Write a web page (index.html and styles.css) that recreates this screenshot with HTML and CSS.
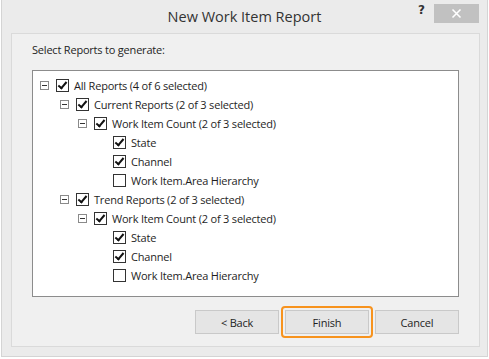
FILE: index.html
```html
<!DOCTYPE html>
<html lang="en">
<head>
    <meta charset="UTF-8">
    <title>New Work Item Report</title>
    <link rel="stylesheet" href="styles.css">
</head>
<body>
    <div class="window">
        <div class="titlebar">
            <span class="title">New Work Item Report</span>
            <span class="help">?</span>
            <span class="close">
                <svg width="11" height="11" viewBox="0 0 11 11"><path d="M1.5 1.5 L9.5 9.5 M9.5 1.5 L1.5 9.5" stroke="#fff" stroke-width="1.6"/></svg>
            </span>
        </div>

        <div class="panel">
            <div class="caption">Select Reports to generate:</div>

            <!-- Report tree -->
            <div class="tree">
                <div class="row lvl0"><span class="exp"></span><span class="cb on"></span><span class="label">All Reports (4 of 6 selected)</span></div>
                <div class="row lvl1"><span class="exp"></span><span class="cb on"></span><span class="label">Current Reports (2 of 3 selected)</span></div>
                <div class="row lvl2"><span class="exp"></span><span class="cb on"></span><span class="label">Work Item Count (2 of 3 selected)</span></div>
                <div class="row lvl3"><span class="cb on"></span><span class="label">State</span></div>
                <div class="row lvl3"><span class="cb on"></span><span class="label">Channel</span></div>
                <div class="row lvl3"><span class="cb"></span><span class="label">Work Item.Area Hierarchy</span></div>
                <div class="row lvl1"><span class="exp"></span><span class="cb on"></span><span class="label">Trend Reports (2 of 3 selected)</span></div>
                <div class="row lvl2"><span class="exp"></span><span class="cb on"></span><span class="label">Work Item Count (2 of 3 selected)</span></div>
                <div class="row lvl3"><span class="cb on"></span><span class="label">State</span></div>
                <div class="row lvl3"><span class="cb on"></span><span class="label">Channel</span></div>
                <div class="row lvl3"><span class="cb"></span><span class="label">Work Item.Area Hierarchy</span></div>
            </div>

            <div class="buttons">
                <button class="btn">&lt; Back</button>
                <span class="focus"><button class="btn">Finish</button></span>
                <button class="btn">Cancel</button>
            </div>
        </div>
    </div>
</body>
</html>
```

FILE: styles.css
```css
body {
    margin: 0;
    background-color: #fff;
    font-family: "Open Sans", "Noto Sans", sans-serif;
    color: #1e1e1e;
}

.window {
    width: 485px;
    height: 356px;
    margin-left: 1px;
    background-color: #ebebeb;
    border: 1px solid #d4d4d4;
    border-top: none;
}

.titlebar {
    position: relative;
    height: 33px;
    display: flex;
    justify-content: center;
    align-items: center;
}

.title {
    font-size: 14.5px;
    color: #333;
    margin-top: -1px;
}

.help {
    position: absolute;
    left: 416px;
    top: 3px;
    font-family: "DejaVu Sans", sans-serif;
    font-weight: bold;
    font-size: 12px;
    color: #333;
}

.close {
    position: absolute;
    left: 432px;
    top: 4px;
    width: 45px;
    height: 19px;
    background-color: #c1c1c1;
    display: flex;
    justify-content: center;
    align-items: center;
}

.panel {
    width: 469px;
    height: 314px;
    margin-left: 9px;
    background-color: #f0f0f0;
    border: 1px solid #dadada;
    box-sizing: border-box;
    padding: 8px 20px 0 20px;
}

.caption {
    font-size: 11px;
    letter-spacing: -0.2px;
    height: 28px;
}

.tree {
    height: 227px;
    background-color: #fff;
    border: 1px solid #8c8c8c;
    box-sizing: border-box;
    padding-top: 5px;
}

.row {
    height: 19px;
    display: flex;
    align-items: center;
    font-size: 11px;
    letter-spacing: -0.2px;
}

.lvl0 { padding-left: 7px; }
.lvl1 { padding-left: 27px; }
.lvl2 { padding-left: 45px; }
.lvl3 { padding-left: 80px; }

.exp {
    position: relative;
    width: 9px;
    height: 9px;
    border: 1px solid #8a8a8a;
    box-sizing: border-box;
    margin-right: 7px;
}

.exp::after {
    content: "";
    position: absolute;
    left: 1px;
    top: 3px;
    width: 5px;
    height: 1px;
    background-color: #333;
}

.cb {
    position: relative;
    width: 13px;
    height: 13px;
    border: 1px solid #333;
    box-sizing: border-box;
    background-color: #fff;
    margin-right: 5px;
}

.cb.on::after {
    content: "";
    position: absolute;
    left: 3px;
    top: 0px;
    width: 3px;
    height: 7px;
    border: solid #111;
    border-width: 0 2px 2px 0;
    transform: rotate(40deg);
}

.label {
    white-space: nowrap;
}

.buttons {
    display: flex;
    justify-content: flex-end;
    align-items: center;
    gap: 2px;
    margin-top: 9px;
}

.btn {
    width: 84px;
    height: 24px;
    background-color: #e5e5e5;
    border: 1px solid #c9c9c9;
    font-family: "Open Sans", "Noto Sans", sans-serif;
    font-size: 11px;
    letter-spacing: -0.2px;
    color: #1e1e1e;
    padding: 0;
}

.focus {
    display: flex;
    padding: 2px;
    border: 2px solid #f7931e;
    border-radius: 4px;
}
```
